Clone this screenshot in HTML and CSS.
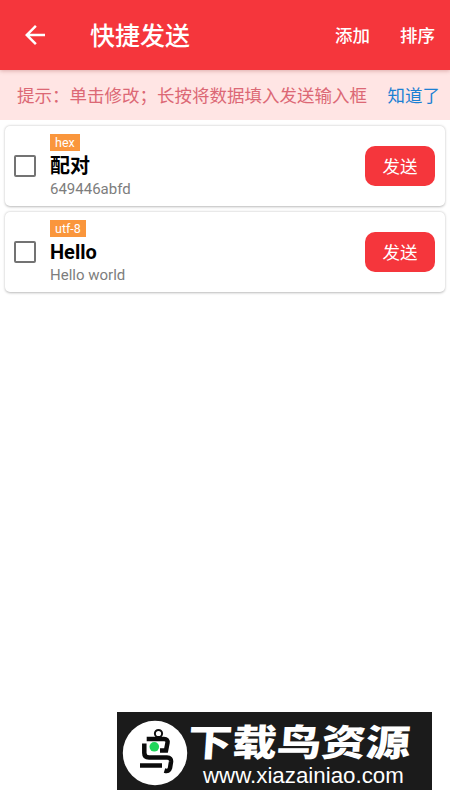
FILE: index.html
```
<!DOCTYPE html>
<html lang="zh-CN">
<head>
    <meta charset="UTF-8">
    <title>快捷发送</title>
    <link rel="stylesheet" href="styles.css">
</head>
<body>
    <header class="toolbar">
        <svg class="back" viewBox="0 0 24 24" width="30" height="30">
            <path d="M20 11H7.83l5.59-5.59L12 4l-8 8 8 8 1.41-1.41L7.83 13H20v-2z" fill="#fff"/>
        </svg>
        <h1>快捷发送</h1>
        <nav class="actions">
            <span>添加</span>
            <span>排序</span>
        </nav>
    </header>

    <div class="hint">
        <span class="hint-text">提示：单击修改；长按将数据填入发送输入框</span>
        <span class="hint-close">知道了</span>
    </div>

    <main class="list">
        <div class="card">
            <span class="checkbox"></span>
            <div class="info">
                <span class="tag">hex</span>
                <div class="name">配对</div>
                <div class="data">649446abfd</div>
            </div>
            <button class="send">发送</button>
        </div>
        <div class="card">
            <span class="checkbox"></span>
            <div class="info">
                <span class="tag">utf-8</span>
                <div class="name">Hello</div>
                <div class="data">Hello world</div>
            </div>
            <button class="send">发送</button>
        </div>
    </main>

    <footer class="site">
        <svg class="logo" viewBox="0 0 66 66" width="66" height="66">
            <circle cx="33" cy="33" r="32.2" fill="#fff"/>
            <circle cx="36.5" cy="13.5" r="3.6" fill="none" stroke="#111" stroke-width="2"/>
            <g fill="none" stroke="#0b0b0b" stroke-width="4.5">
                <path d="M24.7 19H42Q46 19 45.5 23L44 30.5H38"/>
                <path d="M22.3 23.5V33Q22.3 37.5 27 37.5H45Q49.5 37.5 49 42L48 48Q47 52 42.5 50.5"/>
                <path d="M18 45.5H40"/>
            </g>
            <circle cx="32.3" cy="26.8" r="4.8" fill="#20d65a"/>
        </svg>
        <div class="site-text">
            <div class="site-name">下载鸟资源</div>
            <div class="site-url">www.xiazainiao.com</div>
        </div>
    </footer>
</body>
</html>
```
FILE: styles.css
```
* {
    box-sizing: border-box;
}

body {
    margin: 0;
    height: 800px;
    display: flex;
    flex-direction: column;
    background: #fff;
    font-family: Roboto, "Noto Sans CJK SC", sans-serif;
    overflow: hidden;
}

.toolbar {
    position: relative;
    flex: none;
    height: 70px;
    display: flex;
    align-items: center;
    padding: 0 15px 0 20px;
    background: #f5363c;
    color: #fff;
    box-shadow: 0 1px 4px rgba(120, 0, 0, 0.25);
}

.back {
    margin-right: 40px;
}

h1 {
    margin: 0;
    padding-top: 4px;
    font-size: 25px;
    font-weight: 500;
    line-height: 36px;
}

.actions {
    display: flex;
    gap: 30px;
    margin-left: auto;
    padding-bottom: 1px;
    font-size: 17.5px;
    font-weight: 500;
}

.hint {
    flex: none;
    height: 50px;
    display: flex;
    align-items: center;
    justify-content: space-between;
    padding: 0 10px 2px 17px;
    background: #ffe5e4;
    font-size: 17.5px;
    white-space: nowrap;
}

.hint-text {
    color: #dc6875;
}

.hint-close {
    color: #1b80d3;
}

.list {
    display: flex;
    flex-direction: column;
    gap: 6px;
    padding: 6px 5px;
}

.card {
    height: 80px;
    display: flex;
    align-items: center;
    padding: 0 10px 0 9px;
    border-radius: 5px;
    background: #fff;
    box-shadow: 0 0.5px 2.5px rgba(0, 0, 0, 0.28);
}

.checkbox {
    width: 22px;
    height: 22px;
    border: 2px solid #737373;
    border-radius: 2px;
}

.info {
    flex: 1;
    margin-left: 14px;
}

.tag {
    display: block;
    width: fit-content;
    height: 17px;
    padding: 0 5px;
    background: #fa963c;
    color: #fff;
    font-size: 12.5px;
    line-height: 18px;
}

.name {
    height: 27px;
    color: #000;
    font-size: 20px;
    font-weight: bold;
    line-height: 30px;
}

.data {
    height: 20px;
    color: #7d7d7d;
    font-size: 15px;
    line-height: 22px;
}

.send {
    width: 70px;
    height: 40px;
    padding: 0 0 2px;
    border: none;
    border-radius: 10px;
    background: #f5363c;
    color: #fff;
    font-family: inherit;
    font-size: 17.5px;
}

.site {
    width: 315px;
    height: 78px;
    display: flex;
    align-items: center;
    margin: auto 0 10px 117px;
    padding: 3px 0 0 5px;
    background: #1b1b1b;
    color: #fff;
}

.site-text {
    white-space: nowrap;
    padding-top: 6px;
}

.site-name {
    height: 41px;
    font-size: 44.5px;
    font-weight: 900;
    line-height: 42px;
    transform: skewX(-4deg) scaleY(0.83);
}

.site-url {
    margin-left: 15px;
    font-family: "Liberation Sans", sans-serif;
    font-size: 22.3px;
    line-height: 24px;
}
```
